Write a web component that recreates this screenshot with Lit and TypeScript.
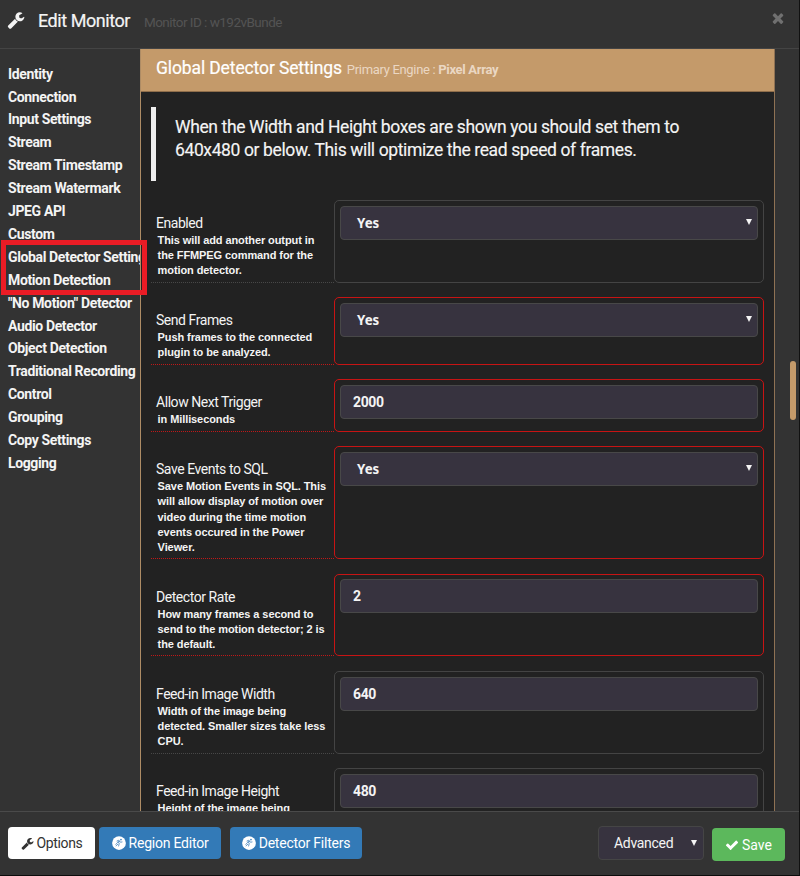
import { LitElement, html, css, svg } from "lit";
import { customElement, property } from "lit/decorators.js";

const ICONS: Record<string, unknown> = {
  wrench: svg`<path d="M1092 1052l-682 682q-37 37-90 37-52 0-91-37l-106-108q-38-36-38-90 0-53 38-91l681-681q39 98 114.5 173.5t173.5 114.5zm634-435q0 39-23 106-47 134-164.5 217.5t-258.5 83.5q-185 0-316.5-131.5t-131.5-316.5 131.5-316.5 316.5-131.5q58 0 121.5 16.5t107.5 46.5q16 11 16 28t-16 28l-293 169v224l193 107q5-3 79-48.5t135.5-81 70.5-35.5q15 0 23.5 10t8.5 25z"/>`,
  check: svg`<path d="M1671 566q0 40-28 68l-724 724-136 136q-28 28-68 28t-68-28l-136-136-362-362q-28-28-28-68t28-68l136-136q28-28 68-28t68 28l294 295 656-657q28-28 68-28t68 28l136 136q28 28 28 68z"/>`,
  times: svg`<path d="M1490 1322q0 40-28 68l-136 136q-28 28-68 28t-68-28l-294-294-294 294q-28 28-68 28t-68-28l-136-136q-28-28-28-68t28-68l294-294-294-294q-28-28-28-68t28-68l136-136q28-28 68-28t68 28l294 294 294-294q28-28 68-28t68 28l136 136q28 28 28 68t-28 68l-294 294 294 294q28 28 28 68z"/>`,
  grav: svg`<circle cx="896" cy="896" r="880"/><path fill="none" stroke="#337ab7" stroke-width="95" stroke-linecap="round" stroke-linejoin="round" d="M480 1060L660 900L800 740L1010 650M800 740L930 960L840 1280M640 640L860 540L1080 800L1290 760M520 1260L760 1040"/><circle cx="1150" cy="460" r="105" fill="#337ab7"/>`,
};

@customElement("fa-icon")
class FaIcon extends LitElement {
  @property() name = "wrench";
  static styles = css`
    :host { display: inline-flex; flex: none; }
    svg { width: 100%; height: 100%; fill: currentColor; display: block; }
  `;
  render() {
    return html`<svg viewBox="0 0 1792 1792">${ICONS[this.name]}</svg>`;
  }
}

interface Field {
  label: string;
  lines: string[];
  value: string;
  select?: boolean;
  red?: boolean;
}

const NAV = [
  "Identity", "Connection", "Input Settings", "Stream", "Stream Timestamp",
  "Stream Watermark", "JPEG API", "Custom", "Global Detector Settings",
  "Motion Detection", "\"No Motion\" Detector", "Audio Detector",
  "Object Detection", "Traditional Recording", "Control", "Grouping",
  "Copy Settings", "Logging",
];

const FIELDS: Field[] = [
  { label: "Enabled", lines: ["This will add another output in", "the FFMPEG command for the", "motion detector."], value: "Yes", select: true },
  { label: "Send Frames", lines: ["Push frames to the connected", "plugin to be analyzed."], value: "Yes", select: true, red: true },
  { label: "Allow Next Trigger", lines: ["in Milliseconds"], value: "2000", red: true },
  { label: "Save Events to SQL", lines: ["Save Motion Events in SQL. This", "will allow display of motion over", "video during the time motion", "events occured in the Power", "Viewer."], value: "Yes", select: true, red: true },
  { label: "Detector Rate", lines: ["How many frames a second to", "send to the motion detector; 2 is", "the default."], value: "2", red: true },
  { label: "Feed-in Image Width", lines: ["Width of the image being", "detected. Smaller sizes take less", "CPU."], value: "640" },
  { label: "Feed-in Image Height", lines: ["Height of the image being", "detected. Smaller sizes take less", "CPU."], value: "480" },
];

@customElement("app-root")
class AppRoot extends LitElement {
  static styles = css`
    :host {
      display: flex; flex-direction: column; position: relative;
      box-sizing: border-box; width: 800px; height: 876px; overflow: hidden;
      background: #333; color: #f4f4f4;
      border-right: 1px solid #111; border-bottom: 1px solid #0c0c0c;
      font: 14px/20px Roboto, "Liberation Sans", sans-serif;
    }
    * { box-sizing: border-box; }
    header {
      flex: none; height: 49px; display: flex; align-items: center;
      border-bottom: 1px solid #444; padding: 0 15px 6px 7px;
    }
    .i-head { width: 18px; height: 18px; margin: -2px 13px 0 0; }
    .title { font-size: 18px; letter-spacing: -0.45px; -webkit-text-stroke: 0.2px; }
    .mid { font-size: 13.5px; letter-spacing: -0.53px; color: #545454; margin: 2px auto 0 14px; }
    .i-close { width: 16px; height: 16px; color: #707070; margin: -6px -2px 0 0; }
    .middle { flex: none; height: 762px; display: flex; overflow: hidden; }
    nav { flex: none; width: 140px; padding: 13.6px 0 0 8px; overflow: hidden; }
    .nav {
      height: 22.92px; line-height: 23px; white-space: nowrap;
      font-weight: 700; letter-spacing: -0.37px;
    }
    .panel {
      width: 635px; flex: none; background: #222;
      border: solid #8f7254; border-width: 0 1px; border-left-color: #ae8c65;
    }
    .ptitle {
      height: 43px; background: #c49a6a; border-bottom: 1px solid #8f6e4b;
      padding: 7.5px 0 0 15px; display: flex; align-items: baseline; color: #fff;
      white-space: nowrap;
    }
    .ptitle .name { font-size: 17.5px; letter-spacing: -0.12px; line-height: 23px; -webkit-text-stroke: 0.2px; }
    .ptitle .sub { font-size: 13px; letter-spacing: -0.32px; color: #ead7c3; margin-left: 5px; }
    .quote {
      margin: 15px 0 19px 10px; height: 74px; border-left: 5px solid #eee;
      padding: 9px 0 0 19px; font-size: 17.5px; letter-spacing: -0.38px;
      line-height: 23px; white-space: nowrap; -webkit-text-stroke: 0.15px;
    }
    .row { display: flex; margin: 0 10px 14.65px 10px; }
    .left {
      width: 183px; flex: none; padding: 13px 0 3px 5px;
      border-bottom: 1px dotted #484848;
    }
    .left.red { border-bottom-color: #c01818; }
    .label { line-height: 20px; height: 20px; letter-spacing: -0.45px; }
    .desc {
      font: 700 11px/15.2px "Liberation Sans", Arial, sans-serif;
      letter-spacing: -0.09px;
      padding-left: 1.6px; white-space: nowrap; color: #f4f4f4;
    }
    .box { flex: 1; border: 1px solid #444; border-radius: 5px; padding: 4.5px 5px; }
    .box.red { border-color: #c81414; }
    .input {
      height: 34px; background: #37333f; border: 1px solid #484848; border-radius: 4px;
      padding: 0 5px 0 12px; display: flex; align-items: center;
      justify-content: space-between; font-weight: 700; letter-spacing: -0.35px;
      font-size: 14px;
    }
    .input.sel { padding-left: 16px; font-family: "Noto Sans", sans-serif; font-size: 13.3px; letter-spacing: 0; }
    .arrow {
      width: 0; height: 0; border: solid transparent; border-width: 6px 3px 0;
      border-top-color: #f4f4f4; margin-top: -1px;
    }
    footer {
      flex: 1; border-top: 1px solid #4a4a4a; display: flex;
      align-items: flex-start; padding: 15px 14px 0 8px;
    }
    .btn {
      height: 32px; border-radius: 4px; display: flex; align-items: center;
      justify-content: center; color: #fff; white-space: nowrap; gap: 3px;
      letter-spacing: -0.22px;
    }
    .opt { width: 87px; background: #fff; color: #333; margin-right: 4px; letter-spacing: -0.35px; }
    .opt .i-btn { width: 13px; height: 13px; }
    .blue { background: #337ab7; }
    .reg { width: 122px; margin-right: 9px; }
    .det { width: 132px; margin-right: auto; }
    .i-btn { width: 14px; height: 14px; }
    .adv {
      width: 106px; height: 34px; background: #37333f; border: 1px solid #454545;
      border-radius: 4px; display: flex; align-items: center; letter-spacing: -0.3px;
      justify-content: space-between; padding: 0 6px 0 15px; margin: -1px 8px 0 0;
    }
    .save { width: 73px; background: #5cb85c; margin-top: 1px; height: 33px; letter-spacing: 0; }
    .mark {
      position: absolute; left: 1px; top: 240px; width: 146px; height: 55px;
      border: 5px solid #ea1c25;
    }
    .thumb {
      position: absolute; left: 790px; top: 361px; width: 6px; height: 59px;
      border-radius: 3px; background: #c49a6a;
    }
  `;

  row(f: Field) {
    const red = f.red ? "red" : "";
    return html`<div class="row">
      <div class="left ${red}">
        <div class="label">${f.label}</div>
        <div class="desc">${f.lines.map((l) => html`<div>${l}</div>`)}</div>
      </div>
      <div class="box ${red}">
        <div class="input ${f.select ? "sel" : ""}">
          <span>${f.value}</span>${f.select ? html`<i class="arrow"></i>` : ""}
        </div>
      </div>
    </div>`;
  }

  render() {
    return html`
      <header>
        <fa-icon class="i-head" name="wrench"></fa-icon>
        <span class="title">Edit Monitor</span>
        <span class="mid">Monitor ID : w192vBunde</span>
        <fa-icon class="i-close" name="times"></fa-icon>
      </header>
      <div class="middle">
        <nav>${NAV.map((n) => html`<div class="nav">${n}</div>`)}</nav>
        <div class="panel">
          <div class="ptitle">
            <span class="name">Global Detector Settings</span>
            <span class="sub">Primary Engine : <b>Pixel Array</b></span>
          </div>
          <div class="quote">
            <div>When the Width and Height boxes are shown you should set them to</div>
            <div>640x480 or below. This will optimize the read speed of frames.</div>
          </div>
          ${FIELDS.map((f) => this.row(f))}
        </div>
      </div>
      <footer>
        <div class="btn opt"><fa-icon class="i-btn" name="wrench"></fa-icon>Options</div>
        <div class="btn blue reg"><fa-icon class="i-btn" name="grav"></fa-icon>Region Editor</div>
        <div class="btn blue det"><fa-icon class="i-btn" name="grav"></fa-icon>Detector Filters</div>
        <div class="adv"><span>Advanced</span><i class="arrow"></i></div>
        <div class="btn save"><fa-icon class="i-btn" name="check"></fa-icon>Save</div>
      </footer>
      <div class="mark"></div>
      <div class="thumb"></div>
    `;
  }
}
